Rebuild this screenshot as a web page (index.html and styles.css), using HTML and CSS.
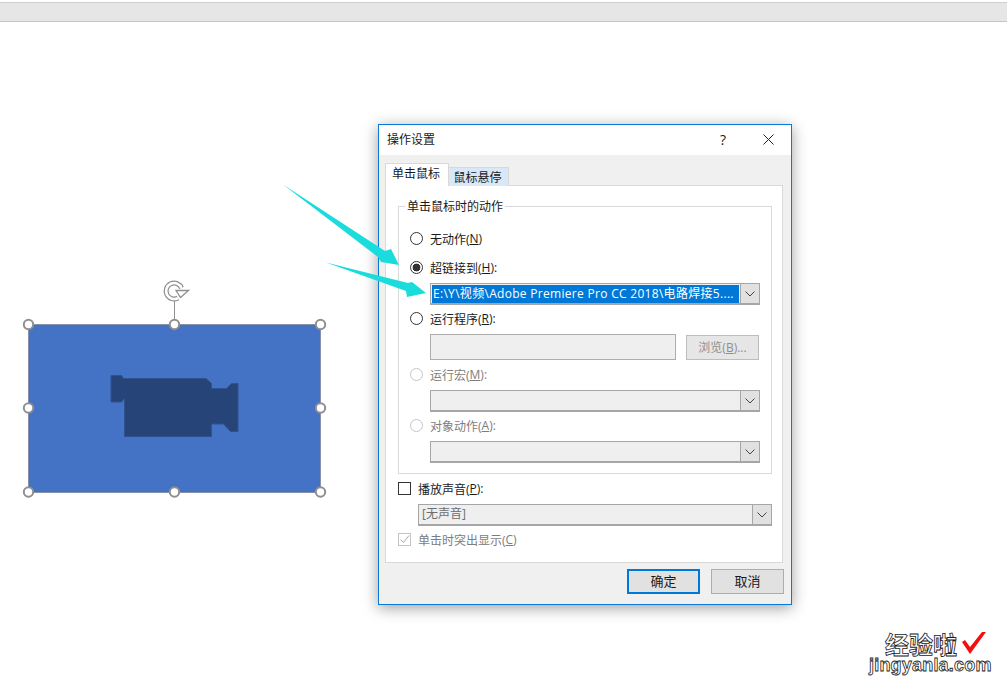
FILE: index.html
```html
<!DOCTYPE html>
<html lang="zh-CN">
<head>
    <meta charset="UTF-8">
    <title>操作设置</title>
    <link rel="stylesheet" href="styles.css">
</head>
<body>
    <div class="ribbon"></div>

    <!-- selected shape on the slide -->
    <svg class="shape" width="320" height="230" viewBox="20 275 320 230">
        <line x1="174.5" y1="300" x2="174.5" y2="325" stroke="#8f8f8f"/>
        <path d="M178 298A8 8 0 1 1 181.5 288" fill="none" stroke="#8f8f8f" stroke-width="5"/>
        <path d="M178 298A8 8 0 1 1 181.5 288" fill="none" stroke="#fff" stroke-width="2.6"/>
        <path d="M176 290.5H188.5L180.5 297.5Z" fill="#fff" stroke="#8f8f8f" stroke-width="1.3"/>
        <rect x="29" y="325" width="291" height="167" fill="#4472c4" stroke="#5d6f8f" stroke-width="1.5"/>
        <path d="M111 375.5H121.5L123.5 378.5H206L211.5 383.5V388.5H226.5L231.5 383.5H238V431.5H230.5L223.5 424H211.5V436.5H124.5V398.5L121.5 402H111Z" fill="#264478" stroke="#2f5290"/>
        <g fill="#fff" stroke="#8f8f8f" stroke-width="2">
            <circle cx="28.5" cy="324.5" r="4.7"/>
            <circle cx="174.5" cy="324.5" r="4.7"/>
            <circle cx="320.5" cy="324.5" r="4.7"/>
            <circle cx="28.5" cy="408" r="4.7"/>
            <circle cx="320.5" cy="408" r="4.7"/>
            <circle cx="28.5" cy="492" r="4.7"/>
            <circle cx="174.5" cy="492" r="4.7"/>
            <circle cx="320.5" cy="492" r="4.7"/>
        </g>
    </svg>

    <div class="dialog">
        <div class="titlebar">
            <span class="title">操作设置</span>
            <span class="help">?</span>
            <svg class="close" width="11" height="11" viewBox="0 0 11 11"><path d="M0.5 0.5L10.5 10.5M10.5 0.5L0.5 10.5" stroke="#222" fill="none"/></svg>
        </div>
        <div class="dialog-body">
            <div class="tabs">
                <div class="tab active">单击鼠标</div>
                <div class="tab">鼠标悬停</div>
            </div>
            <div class="panel">
                <div class="group">
                    <div class="legend">单击鼠标时的动作</div>
                    <label class="row row-none"><span class="radio"></span>无动作(<u>N</u>)</label>
                    <label class="row row-link"><span class="radio checked"></span>超链接到(<u>H</u>):</label>
                    <div class="select">
                        <div class="select-value selected">E:\Y\视频\Adobe Premiere Pro CC 2018\电路焊接5....</div>
                        <span class="arrow"><svg width="10" height="6" viewBox="0 0 10 6"><path d="M0.5 0.5L5 5L9.5 0.5" fill="none" stroke="#444"/></svg></span>
                    </div>
                    <label class="row row-program"><span class="radio"></span>运行程序(<u>R</u>):</label>
                    <div class="browse-row">
                        <div class="textbox"></div>
                        <div class="btn btn-disabled">浏览(<u>B</u>)...</div>
                    </div>
                    <label class="row row-macro off"><span class="radio"></span>运行宏(<u>M</u>):</label>
                    <div class="select">
                        <div class="select-value"></div>
                        <span class="arrow"><svg width="10" height="6" viewBox="0 0 10 6"><path d="M0.5 0.5L5 5L9.5 0.5" fill="none" stroke="#444"/></svg></span>
                    </div>
                    <label class="row row-object off"><span class="radio"></span>对象动作(<u>A</u>):</label>
                    <div class="select">
                        <div class="select-value"></div>
                        <span class="arrow"><svg width="10" height="6" viewBox="0 0 10 6"><path d="M0.5 0.5L5 5L9.5 0.5" fill="none" stroke="#444"/></svg></span>
                    </div>
                </div>
                <label class="check-row"><span class="checkbox"></span>播放声音(<u>P</u>):</label>
                <div class="select select-sound">
                    <div class="select-value muted">[无声音]</div>
                    <span class="arrow"><svg width="10" height="6" viewBox="0 0 10 6"><path d="M0.5 0.5L5 5L9.5 0.5" fill="none" stroke="#444"/></svg></span>
                </div>
                <label class="check-row check-flash off">
                    <span class="checkbox disabled"><svg width="11" height="11" viewBox="0 0 11 11"><path d="M1.5 5.5L4.5 8.5L10 1.5" fill="none" stroke="#a8a8a8"/></svg></span>单击时突出显示(<u>C</u>)
                </label>
            </div>
            <div class="actions">
                <div class="btn btn-primary">确定</div>
                <div class="btn">取消</div>
            </div>
        </div>
    </div>

    <!-- annotation arrows drawn over the dialog -->
    <svg class="arrows" width="1007" height="682" viewBox="0 0 1007 682">
        <path d="M283 184.5L385 251L391 249L399 265L381 262L378 257Z" fill="#1adcdc"/>
        <path d="M326 262.5L408 283L412 282L426 293L407 297L406 291Z" fill="#1adcdc"/>
    </svg>

    <div class="watermark">
        <div class="wm-cn">经验啦<svg class="wm-check" width="26" height="24" viewBox="0 0 26 24"><path d="M1 11L4 9L9 16L21 1H25L9 23Z" fill="#f01010"/></svg></div>
        <div class="wm-en">jingyanla.com</div>
    </div>
</body>
</html>
```

FILE: styles.css
```css
html, body {
    margin: 0;
    height: 100%;
}
body {
    position: relative;
    width: 1007px;
    height: 682px;
    overflow: hidden;
    background: #fff;
    font-family: "Open Sans", "Noto Sans CJK SC", sans-serif;
    font-size: 12px;
    color: #1a1a1a;
}
.ribbon {
    margin-top: 2px;
    height: 18px;
    background: #e6e6e6;
    border-top: 1px solid #cfcfcf;
    border-bottom: 1px solid #c6c6c6;
}
.shape {
    position: absolute;
    left: 20px;
    top: 275px;
}
.dialog {
    position: absolute;
    left: 378px;
    top: 124px;
    width: 412px;
    height: 479px;
    border: 1px solid #0a7ad6;
    background: #f0f0f0;
    box-shadow: 0 3px 14px rgba(0, 0, 0, 0.38);
    display: flex;
    flex-direction: column;
}
.titlebar {
    height: 30px;
    box-sizing: border-box;
    background: #fff;
    display: flex;
    align-items: center;
    padding: 0 0 2px 8px;
    flex-shrink: 0;
}
.title {
    flex: 1;
}
.help {
    font-size: 14px;
    margin-right: 37px;
}
.close {
    margin-right: 17px;
}
.dialog-body {
    padding: 9px 7px 0 6px;
    flex: 1;
}
.tabs {
    display: flex;
    align-items: flex-end;
    height: 22px;
    position: relative;
    z-index: 1;
}
.tab {
    width: 60px;
    height: 19px;
    line-height: 19px;
    padding-right: 2px;
    text-align: center;
    background: #d9e8f7;
    border: 1px solid #d9d9d9;
    border-left: 0;
    border-bottom: 0;
    box-sizing: border-box;
}
.tab.active {
    width: 64px;
    height: 23px;
    line-height: 20px;
    background: #fff;
    border-left: 1px solid #d9d9d9;
}
.panel {
    height: 378px;
    box-sizing: border-box;
    background: #fff;
    border: 1px solid #d9d9d9;
    padding: 20px 10px 0 12px;
    margin: -1px 1px 0 0;
}
.group {
    position: relative;
    height: 268px;
    box-sizing: border-box;
    border: 1px solid #d9d9d9;
    padding: 0 11px 0 31px;
}
.legend {
    position: absolute;
    left: 6px;
    top: -9px;
    padding: 0 2px;
    background: #fff;
    line-height: 18px;
}
.row {
    display: flex;
    align-items: center;
    height: 17px;
    margin-left: -20px;
}
.row-none { margin-top: 23px; }
.row-link { margin-top: 12px; }
.row-program { margin-top: 5px; }
.row-macro { margin-top: 6px; }
.row-object { margin-top: 5px; }
.off {
    color: #7d7d7d;
}
.radio {
    width: 13px;
    height: 13px;
    box-sizing: border-box;
    border: 1px solid #333;
    border-radius: 50%;
    margin-right: 7px;
    background: #fff;
    flex-shrink: 0;
}
.radio.checked {
    background: radial-gradient(circle, #333 0 3.6px, #fff 4.2px);
}
.off .radio {
    border-color: #c4c4c4;
}
.select {
    height: 22px;
    box-sizing: border-box;
    border: 1px solid #a6a6a6;
    border-bottom-width: 2px;
    background: #efefef;
    display: flex;
    margin-top: 7px;
}
.select-value {
    flex: 1;
    height: 19px;
    line-height: 18px;
    box-sizing: border-box;
    white-space: nowrap;
    overflow: hidden;
}
.selected {
    background: #0078d7;
    color: #fff;
    height: 18px;
    margin: 1px 1px 0;
    padding-left: 1px;
    letter-spacing: 0.3px;
}
.muted {
    color: #6d6d6d;
    padding-left: 3px;
}
.arrow {
    width: 18px;
    display: flex;
    align-items: center;
    justify-content: center;
    background: #e1e1e1;
    border-left: 1px solid #a6a6a6;
}
.browse-row {
    display: flex;
    justify-content: space-between;
    margin-top: 7px;
    padding-right: 1px;
}
.textbox {
    width: 246px;
    height: 26px;
    box-sizing: border-box;
    border: 1px solid #adadad;
    background: #efefef;
}
.btn {
    width: 73px;
    height: 25px;
    line-height: 23px;
    box-sizing: border-box;
    text-align: center;
    border: 1px solid #adadad;
    background: #e1e1e1;
    font-size: 13px;
}
.btn-disabled {
    font-size: 12px;
    color: #8f8f8f;
    background: #e6e6e6;
    border-color: #bdbdbd;
    margin-top: 1px;
}
.check-row {
    display: flex;
    align-items: center;
    height: 17px;
    margin-top: 6px;
}
.check-flash {
    margin-top: 5px;
}
.checkbox {
    width: 13px;
    height: 13px;
    box-sizing: border-box;
    border: 1px solid #333;
    margin-right: 7px;
    background: #fff;
    flex-shrink: 0;
    display: flex;
}
.checkbox.disabled {
    border-color: #c4c4c4;
}
.select-sound {
    margin-left: 20px;
}
.actions {
    display: flex;
    justify-content: flex-end;
    gap: 11px;
    margin-top: 6px;
}
.btn-primary {
    border: 2px solid #0078d7;
    line-height: 21px;
}
.arrows {
    position: absolute;
    left: 0;
    top: 0;
    pointer-events: none;
}
.watermark {
    position: absolute;
    left: 869px;
    top: 631px;
    width: 125px;
    color: #fff;
    font-weight: 700;
    -webkit-text-stroke: 0.8px #222;
}
.wm-cn {
    font-family: "Noto Sans CJK SC", sans-serif;
    font-size: 24px;
    line-height: 26px;
    padding-left: 16px;
    position: relative;
}
.wm-check {
    position: absolute;
    left: 92px;
    top: 0;
}
.wm-en {
    font-family: "Liberation Sans", sans-serif;
    font-size: 18px;
    line-height: 17px;
    letter-spacing: 0.2px;
}
```
